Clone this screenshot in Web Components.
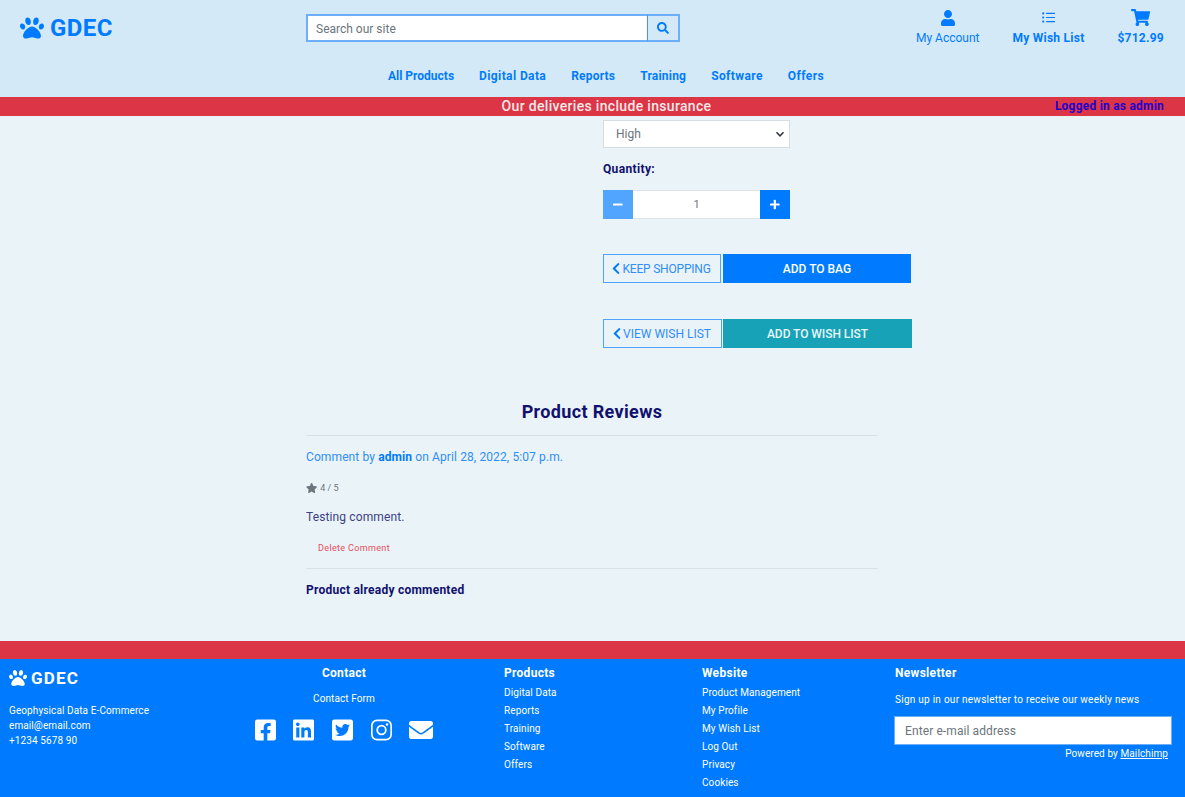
<!DOCTYPE html>
<html lang="en">
<head>
<meta charset="utf-8">
<title>GDEC</title>
<style>
  html, body { margin: 0; padding: 0; }
  body { font-family: Roboto, "Liberation Sans", sans-serif; background: #eaf3f7; height: 797px; overflow: hidden; }
  gd-icon { color: inherit; }
</style>
</head>
<body>
<gd-header></gd-header>
<gd-banner>Our deliveries include insurance</gd-banner>
<gd-main></gd-main>
<gd-footer></gd-footer>

<script>
const ICONS = {
    paw: [512, '<path d="M256 224c-79.41 0-192 122.76-192 200.25 0 34.9 26.81 55.75 71.74 55.75 48.84 0 81.09-25.08 120.26-25.08 39.51 0 71.85 25.08 120.26 25.08 44.93 0 71.74-20.85 71.74-55.75C448 346.76 335.41 224 256 224zm-147.28-12.61c-10.4-34.65-42.44-57.09-71.56-50.13-29.12 6.96-44.29 40.69-33.89 75.34 10.4 34.65 42.44 57.09 71.56 50.13 29.12-6.96 44.29-40.69 33.89-75.34zm84.72-20.78c30.94-8.14 46.42-49.94 34.58-93.36s-46.52-72.01-77.46-63.87-46.42 49.94-34.58 93.36c11.84 43.42 46.52 72.01 77.46 63.87zm281.39-29.34c-29.12-6.96-61.15 15.48-71.56 50.13-10.4 34.65 4.77 68.38 33.89 75.34 29.12 6.96 61.15-15.48 71.56-50.13 10.4-34.65-4.77-68.38-33.89-75.34zm-156.27 29.34c30.94 8.14 65.62-20.45 77.46-63.87 11.84-43.42-3.64-85.21-34.58-93.36s-65.62 20.45-77.46 63.87c-11.84 43.42 3.64 85.22 34.58 93.36z"/>'],
    user: [448, '<path d="M224 256c70.7 0 128-57.3 128-128S294.7 0 224 0 96 57.3 96 128s57.3 128 128 128zm89.6 32h-16.7c-22.2 10.2-46.9 16-72.9 16s-50.6-5.8-72.9-16h-16.7C60.2 288 0 348.2 0 422.4V464c0 26.5 21.5 48 48 48h352c26.5 0 48-21.5 48-48v-41.6c0-74.2-60.2-134.4-134.4-134.4z"/>'],
    cart: [576, '<path d="M528.12 301.319l47.273-208C578.806 78.301 567.391 64 551.99 64H159.208l-9.166-44.81C147.758 8.021 137.93 0 126.529 0H24C10.745 0 0 10.745 0 24v16c0 13.255 10.745 24 24 24h69.883l70.248 343.435C147.325 417.1 136 435.222 136 456c0 30.928 25.072 56 56 56s56-25.072 56-56c0-15.674-6.447-29.835-16.824-40h209.647C430.447 426.165 424 440.326 424 456c0 30.928 25.072 56 56 56s56-25.072 56-56c0-22.172-12.888-41.332-31.579-50.405l5.517-24.276c3.413-15.018-8.002-29.319-23.403-29.319H218.117l-6.545-32h293.145c11.206 0 20.92-7.754 23.403-18.681z"/>'],
    search: [512, '<path d="M505 442.7L405.3 343c-4.5-4.5-10.6-7-17-7H372c27.6-35.3 44-79.7 44-128C416 93.1 322.9 0 208 0S0 93.1 0 208s93.1 208 208 208c48.3 0 92.7-16.4 128-44v16.3c0 6.4 2.5 12.5 7 17l99.7 99.7c9.4 9.4 24.6 9.4 33.9 0l28.3-28.3c9.4-9.4 9.4-24.6.1-34zM208 336c-70.7 0-128-57.2-128-128 0-70.7 57.2-128 128-128 70.7 0 128 57.2 128 128 0 70.7-57.2 128-128 128z"/>'],
    list: [512, '<circle cx="48" cy="96" r="44"/><circle cx="48" cy="256" r="44"/><circle cx="48" cy="416" r="44"/><rect x="160" y="72" width="352" height="48" rx="12"/><rect x="160" y="232" width="352" height="48" rx="12"/><rect x="160" y="392" width="352" height="48" rx="12"/>'],
    star: [576, '<path d="M259.3 17.8L194 150.2 47.9 171.5c-26.2 3.8-36.7 36.1-17.7 54.6l105.7 103-25 145.5c-4.5 26.3 23.2 46 46.4 33.7L288 439.6l130.7 68.7c23.2 12.2 50.9-7.4 46.4-33.7l-25-145.5 105.7-103c19-18.5 8.5-50.8-17.7-54.6L382 150.2 316.7 17.8c-11.7-23.6-45.6-23.9-57.4 0z"/>'],
    chevron: [320, '<path d="M34.52 239.03L228.87 44.69c9.37-9.37 24.57-9.37 33.94 0l22.67 22.67c9.36 9.36 9.37 24.52.04 33.9L131.49 256l154.02 154.75c9.34 9.38 9.32 24.54-.04 33.9l-22.67 22.67c-9.37 9.37-24.57 9.37-33.94 0L34.52 272.97c-9.37-9.37-9.37-24.57 0-33.94z"/>'],
    minus: [448, '<rect x="0" y="204" width="448" height="104" rx="32"/>'],
    plus: [448, '<rect x="0" y="204" width="448" height="104" rx="32"/><rect x="172" y="32" width="104" height="448" rx="32"/>'],
    facebook: [448, '<path d="M400 32H48A48 48 0 0 0 0 80v352a48 48 0 0 0 48 48h137.25V327.69h-63V256h63v-54.64c0-62.15 37-96.48 93.67-96.48 27.14 0 55.52 4.84 55.52 4.84v61h-31.27c-30.81 0-40.42 19.12-40.42 38.73V256h68.78l-11 71.69h-57.78V480H400a48 48 0 0 0 48-48V80a48 48 0 0 0-48-48z"/>'],
    linkedin: [448, '<path d="M416 32H31.9C14.3 32 0 46.5 0 64.3v383.4C0 465.5 14.3 480 31.9 480H416c17.6 0 32-14.5 32-32.3V64.3c0-17.8-14.4-32.3-32-32.3zM135.4 416H69V202.2h66.5V416zm-33.2-243c-21.3 0-38.5-17.3-38.5-38.5S80.9 96 102.2 96c21.2 0 38.5 17.3 38.5 38.5 0 21.3-17.2 38.5-38.5 38.5zm282.1 243h-66.4V312c0-24.8-.5-56.7-34.5-56.7-34.6 0-39.9 27-39.9 54.9V416h-66.4V202.2h63.7v29.2h.9c8.9-16.8 30.6-34.5 62.9-34.5 67.2 0 79.7 44.3 79.7 101.9V416z"/>'],
    twitter: [448, '<path d="M400 32H48C21.5 32 0 53.5 0 80v352c0 26.5 21.5 48 48 48h352c26.5 0 48-21.5 48-48V80c0-26.5-21.5-48-48-48zm-48.9 158.8c.2 2.8.2 5.7.2 8.5 0 86.7-66 186.6-186.6 186.6-37.2 0-71.7-10.8-100.7-29.4 5.3.6 10.4.8 15.8.8 30.7 0 58.9-10.4 81.4-28-28.8-.6-53-19.5-61.3-45.5 10.1 1.5 19.2 1.5 29.6-1.2-30-6.1-52.5-32.5-52.5-64.4v-.8c8.7 4.9 18.9 7.9 29.6 8.3a65.447 65.447 0 0 1-29.2-54.6c0-12.2 3.2-23.4 8.9-33.1 32.3 39.8 80.8 65.8 135.2 68.6-9.3-44.5 24-80.6 64-80.6 18.9 0 35.9 7.9 47.9 20.7 14.8-2.8 29-8.3 41.6-15.8-4.9 15.2-15.1 28-28.7 36 13.2-1.4 26-5.1 37.8-10.2-8.9 13.1-20.1 24.7-32.9 34.1z"/>'],
    instagram: [448, '<rect x="18" y="50" width="412" height="412" rx="110" fill="none" stroke="currentColor" stroke-width="36"/><circle cx="224" cy="256" r="92" fill="none" stroke="currentColor" stroke-width="38"/><circle cx="342" cy="138" r="26"/>'],
    envelope: [512, '<path d="M502.3 190.8c3.9-3.1 9.7-.2 9.7 4.7V400c0 26.5-21.5 48-48 48H48c-26.5 0-48-21.5-48-48V195.6c0-5 5.7-7.8 9.7-4.7 22.4 17.4 52.1 39.5 154.1 113.6 21.1 15.4 56.7 47.8 92.2 47.6 35.7.3 72-32.8 92.3-47.6 102-74.1 131.6-96.3 154-113.7zM256 320c23.2.4 56.6-29.2 73.4-41.4 132.7-96.3 142.8-104.7 173.4-128.7 5.8-4.5 9.2-11.5 9.2-18.9v-19c0-26.5-21.5-48-48-48H48C21.5 64 0 85.5 0 112v19c0 7.4 3.4 14.3 9.2 18.9 30.6 23.9 40.7 32.4 173.4 128.7 16.8 12.2 50.2 41.8 73.4 41.4z"/>']
};

class GdIcon extends HTMLElement {
    constructor(){
        super();
        this.shadowObj = this.attachShadow({mode:'open'});
    }

    connectedCallback(){
        const [width, body] = ICONS[this.getAttribute('name')];
        const size = this.getAttribute('size') || 16;
        this.shadowObj.innerHTML = `
            <style>
                :host { display: inline-flex; line-height: 0; }
                svg { fill: currentColor; height: ${size}px; width: ${size * width / 512}px; }
            </style>
            <svg viewBox="0 0 ${width} 512">${body}</svg>
        `;
    }
}
customElements.define('gd-icon', GdIcon);

class GdHeader extends HTMLElement {
    constructor(){
        super();
        this.shadowObj = this.attachShadow({mode:'open'});
    }

    connectedCallback(){
        this.shadowObj.innerHTML = `
            <style>
                :host { display: block; height: 97px; background: #d4e9f7; color: #007bff; box-sizing: border-box; }
                .top { display: grid; grid-template-columns: 306px 374px 1fr; height: 60px; }
                .logo { display: flex; align-items: center; gap: 6px; padding-left: 20px; font-size: 24px; font-weight: 700; letter-spacing: .4px; height: 55px; box-sizing: border-box; }
                .search { display: flex; height: 28px; margin-top: 14px; box-sizing: border-box; }
                .search div { flex: 1; background: #fff; border: 2px solid #6cb0fb; border-right: 1px solid #3d96f7; padding: 1px 0 0 8px; font-size: 12px; color: #6c757d; display: flex; align-items: center; }
                .search span { width: 30px; border: 2px solid #6cb0fb; border-left: 0; display: flex; align-items: center; justify-content: center; }
                .links { display: flex; justify-content: flex-end; padding-top: 9px; }
                .links a { display: flex; flex-direction: column; align-items: center; font-size: 12px; }
                .links a span { margin-top: 5px; }
                .links gd-icon { height: 17px; align-items: center; }
                .b { font-weight: 700; letter-spacing: .25px; }
                nav { display: flex; justify-content: center; gap: 25px; font-size: 12px; font-weight: 700; letter-spacing: .2px; padding: 9px 0 0 27px; }
                nav .tight { letter-spacing: 0; }
                nav .wide { letter-spacing: .4px; }
            </style>
            <div class="top">
                <div class="logo"><gd-icon name="paw" size="24"></gd-icon>GDEC</div>
                <div class="search"><div>Search our site</div><span><gd-icon name="search" size="12"></gd-icon></span></div>
                <div class="links">
                    <a style="margin-right:33px"><gd-icon name="user" size="16"></gd-icon><span>My Account</span></a>
                    <a class="b" style="margin-right:33px"><gd-icon name="list" size="13"></gd-icon><span>My Wish List</span></a>
                    <a class="b" style="margin-right:21px"><gd-icon name="cart" size="17"></gd-icon><span>$712.99</span></a>
                </div>
            </div>
            <nav>
                <span class="tight">All Products</span><span class="wide">Digital Data</span><span>Reports</span><span>Training</span><span class="wide">Software</span><span class="wide">Offers</span>
            </nav>
        `;
    }
}
customElements.define('gd-header', GdHeader);

class GdBanner extends HTMLElement {
    constructor(){
        super();
        this.shadowObj = this.attachShadow({mode:'open'});
    }

    connectedCallback(){
        this.shadowObj.innerHTML = `
            <style>
                :host { display: grid; grid-template-columns: 1fr auto 1fr; align-items: center; height: 19px; padding-bottom: 1px; box-sizing: border-box; background: #dc3545; font-size: 14px; font-weight: 500; letter-spacing: .32px; color: #f4e8ea; }
                .msg { padding-left: 28px; }
                .who { justify-self: end; padding-right: 21px; font-size: 12px; font-weight: 700; letter-spacing: .22px; color: #2200cc; }
            </style>
            <span></span><span class="msg"><slot></slot></span><span class="who">Logged in as admin</span>
        `;
    }
}
customElements.define('gd-banner', GdBanner);

class GdProductForm extends HTMLElement {
    constructor(){
        super();
        this.shadowObj = this.attachShadow({mode:'open'});
    }

    connectedCallback(){
        this.shadowObj.innerHTML = `
            <style>
                :host { display: block; padding: 4px 0 0 603px; font-size: 12px; }
                .select { width: 187px; height: 28px; box-sizing: border-box; background: #fff; border: 1px solid #d6dde3; color: #6c757d; display: flex; align-items: center; justify-content: space-between; padding: 0 4px 0 12px; }
                label { display: block; margin: 14px 0 14px; font-weight: 700; letter-spacing: .35px; color: #10116e; line-height: 14px; }
                .stepper { display: flex; width: 187px; height: 29px; }
                .stepper span { width: 30px; display: flex; align-items: center; justify-content: center; color: #fff; background: #007bff; }
                .stepper span.off { background: #52a5ff; }
                .stepper div { flex: 1; background: #fff; border-bottom: 1px solid #dfe5ea; border-top: 1px solid #dfe5ea; box-sizing: border-box; color: #6c757d; display: flex; align-items: center; justify-content: center; font-size: 11px; }
                .row { display: flex; gap: 2px; height: 29px; margin-top: 35px; }
                .row + .row { margin-top: 36px; gap: 1px; }
                .ghost { box-sizing: border-box; border: 1px solid #4fa3fc; color: #2f8efb; display: flex; align-items: center; justify-content: center; gap: 2px; padding-right: 1px; }
                .ghost gd-icon { color: #007bff; }
                .solid { box-sizing: border-box; width: 188px; background: #007bff; color: #fff; display: flex; align-items: center; justify-content: center; font-weight: 500; }
                .teal { width: 189px; background: #17a2b8; color: #e6f6f9; letter-spacing: -.05px; }
            </style>
            <div class="select"><span>High</span><svg width="10" height="10" viewBox="0 0 10 10"><path d="M1.5 3.2 5 6.8 8.5 3.2" fill="none" stroke="#343a40" stroke-width="1.6"/></svg></div>
            <label>Quantity:</label>
            <div class="stepper">
                <span class="off"><gd-icon name="minus" size="11"></gd-icon></span>
                <div>1</div>
                <span><gd-icon name="plus" size="11"></gd-icon></span>
            </div>
            <div class="row">
                <div class="ghost" style="width:118px;letter-spacing:-.2px"><gd-icon name="chevron" size="13"></gd-icon>KEEP SHOPPING</div>
                <div class="solid">ADD TO BAG</div>
            </div>
            <div class="row">
                <div class="ghost" style="width:119px"><gd-icon name="chevron" size="13"></gd-icon>VIEW WISH LIST</div>
                <div class="solid teal">ADD TO WISH LIST</div>
            </div>
        `;
    }
}
customElements.define('gd-product-form', GdProductForm);

class GdReviews extends HTMLElement {
    constructor(){
        super();
        this.shadowObj = this.attachShadow({mode:'open'});
    }

    connectedCallback(){
        this.shadowObj.innerHTML = `
            <style>
                :host { display: block; width: 572px; margin: 53px 0 0 306px; font-size: 12px; }
                h2 { margin: 0; font-size: 18px; line-height: 22px; font-weight: 700; letter-spacing: .35px; text-align: center; color: #10116e; padding-bottom: 12px; border-bottom: 1px solid #d9e0e6; }
                .by { margin-top: 14px; color: #2f8efb; line-height: 14px; letter-spacing: .11px; }
                .by b { color: #007bff; }
                .rate { display: flex; align-items: center; gap: 3px; margin-top: 18px; color: #6c757d; font-size: 9px; height: 12px; }
                .text { margin-top: 16px; line-height: 14px; color: #3c3f85; letter-spacing: .12px; }
                .del { margin-top: 18px; padding-left: 12px; font-size: 9px; letter-spacing: .35px; line-height: 12px; color: #e84c5c; padding-bottom: 14px; border-bottom: 1px solid #d9e0e6; }
                .done { margin-top: 14px; font-weight: 700; letter-spacing: .24px; color: #10116e; line-height: 14px; }
            </style>
            <h2>Product Reviews</h2>
            <div class="by">Comment by <b>admin</b> on April 28, 2022, 5:07 p.m.</div>
            <div class="rate"><gd-icon name="star" size="10"></gd-icon>4 / 5</div>
            <div class="text">Testing comment.</div>
            <div class="del">Delete Comment</div>
            <div class="done">Product already commented</div>
        `;
    }
}
customElements.define('gd-reviews', GdReviews);

class GdMain extends HTMLElement {
    constructor(){
        super();
        this.shadowObj = this.attachShadow({mode:'open'});
    }

    connectedCallback(){
        this.shadowObj.innerHTML = `
            <style>
                :host { display: block; height: 525px; background: #eaf3f7; overflow: hidden; }
            </style>
            <gd-product-form></gd-product-form>
            <gd-reviews></gd-reviews>
        `;
    }
}
customElements.define('gd-main', GdMain);

class GdFooter extends HTMLElement {
    constructor(){
        super();
        this.shadowObj = this.attachShadow({mode:'open'});
    }

    connectedCallback(){
        this.shadowObj.innerHTML = `
            <style>
                :host { display: block; border-top: 18px solid #dc3545; background: #007bff; color: #fff; height: 138px; font-size: 10px; letter-spacing: .1px; }
                .cols { display: grid; grid-template-columns: 504px 198px 192px 1fr; height: 138px; }
                .left { display: grid; grid-template-columns: 237px 1fr; }
                .brand { padding: 7px 0 0 9px; }
                .logo { display: flex; align-items: center; gap: 4px; font-size: 17px; font-weight: 700; letter-spacing: 1.2px; height: 24px; }
                .addr { margin-top: 13px; line-height: 15px; }
                .contact { text-align: center; width: 214px; padding-top: 7px; }
                h4 { margin: 0; font-size: 12px; line-height: 14px; font-weight: 700; letter-spacing: .3px; }
                .contact p { margin: 12px 0 0; line-height: 14px; }
                .social { display: flex; justify-content: center; gap: 17.6px; margin-top: 12px; }
                ul { list-style: none; margin: 4px 0 0; padding: 0; }
                li { line-height: 18px; }
                .col { padding-top: 7px; }
                .news h4, .news p { margin-left: 1px; }
                .news p { margin-top: 13px; margin-bottom: 0; line-height: 14px; letter-spacing: .26px; }
                .input { margin: 9px 13px 0 0; height: 29px; box-sizing: border-box; background: #fff; border: 1px solid #6cb0fb; color: #6c757d; font-size: 12px; display: flex; align-items: center; padding-left: 10px; }
                .power { text-align: right; margin: 2px 17px 0 0; line-height: 13px; }
                .power u { text-decoration: underline; }
            </style>
            <div class="cols">
                <div class="left">
                    <div class="brand">
                        <div class="logo"><gd-icon name="paw" size="18"></gd-icon>GDEC</div>
                        <div class="addr">Geophysical Data E-Commerce<br>email@email.com<br>+1234 5678 90</div>
                    </div>
                    <div class="contact">
                        <h4>Contact</h4>
                        <p>Contact Form</p>
                        <div class="social">
                            <gd-icon name="facebook" size="24"></gd-icon>
                            <gd-icon name="linkedin" size="24"></gd-icon>
                            <gd-icon name="twitter" size="24"></gd-icon>
                            <gd-icon name="instagram" size="24"></gd-icon>
                            <gd-icon name="envelope" size="24"></gd-icon>
                        </div>
                    </div>
                </div>
                <div class="col">
                    <h4>Products</h4>
                    <ul><li>Digital Data</li><li>Reports</li><li>Training</li><li>Software</li><li>Offers</li></ul>
                </div>
                <div class="col">
                    <h4>Website</h4>
                    <ul><li>Product Management</li><li>My Profile</li><li>My Wish List</li><li>Log Out</li><li>Privacy</li><li>Cookies</li></ul>
                </div>
                <div class="col news">
                    <h4>Newsletter</h4>
                    <p>Sign up in our newsletter to receive our weekly news</p>
                    <div class="input">Enter e-mail address</div>
                    <div class="power">Powered by <u>Mailchimp</u></div>
                </div>
            </div>
        `;
    }
}
customElements.define('gd-footer', GdFooter);
</script>
</body>
</html>
